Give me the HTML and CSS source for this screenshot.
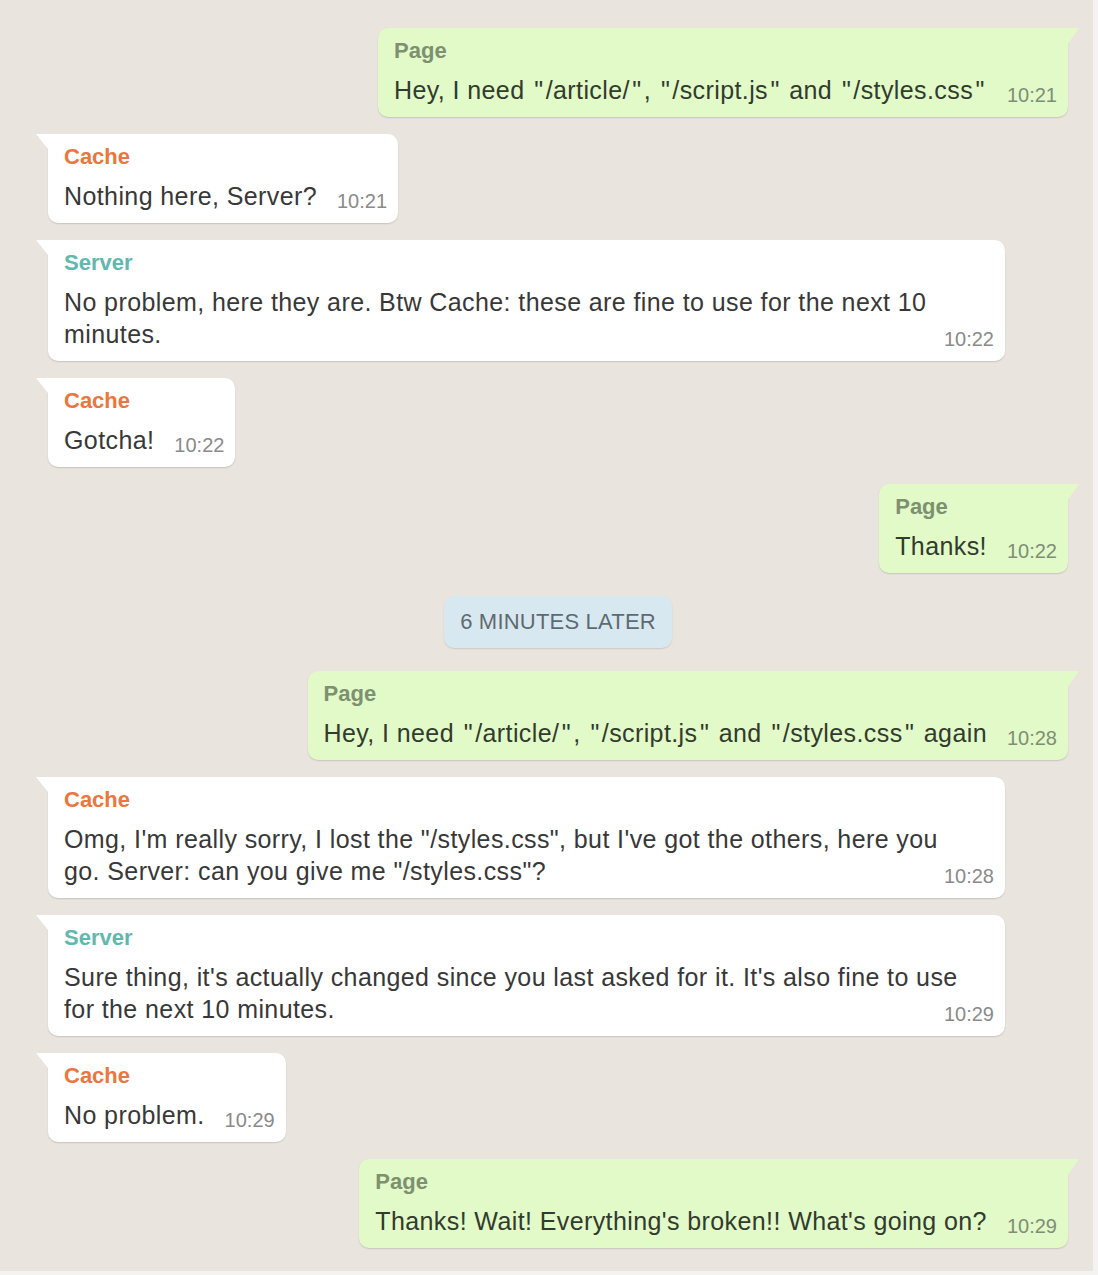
FILE: index.html
```html
<!DOCTYPE html>
<html lang="en">
<head>
<meta charset="utf-8">
<title>Cache chat</title>
<link rel="stylesheet" href="styles.css">
</head>
<body>
<div class="chat">
  <div class="row out">
    <div class="bubble page">
      <div class="name">Page</div>
      <div class="text">Hey, I need <span class="qt">"</span>/article/<span class="qt">"</span>, <span class="qt">"</span>/script.js<span class="qt">"</span> and <span class="qt">"</span>/styles.css<span class="qt">"</span><span class="time">10:21</span></div>
    </div>
  </div>
  <div class="row in">
    <div class="bubble">
      <div class="name cache">Cache</div>
      <div class="text">Nothing here, Server?<span class="time">10:21</span></div>
    </div>
  </div>
  <div class="row in">
    <div class="bubble">
      <div class="name server">Server</div>
      <div class="text">No problem, here they are. Btw Cache: these are fine to use for the next 10 minutes.<span class="time">10:22</span></div>
    </div>
  </div>
  <div class="row in">
    <div class="bubble">
      <div class="name cache">Cache</div>
      <div class="text">Gotcha!<span class="time">10:22</span></div>
    </div>
  </div>
  <div class="row out">
    <div class="bubble page">
      <div class="name">Page</div>
      <div class="text">Thanks!<span class="time">10:22</span></div>
    </div>
  </div>
  <div class="row center">
    <div class="divider">6 MINUTES LATER</div>
  </div>
  <div class="row out">
    <div class="bubble page">
      <div class="name">Page</div>
      <div class="text">Hey, I need <span class="qt">"</span>/article/<span class="qt">"</span>, <span class="qt">"</span>/script.js<span class="qt">"</span> and <span class="qt">"</span>/styles.css<span class="qt">"</span> again<span class="time">10:28</span></div>
    </div>
  </div>
  <div class="row in">
    <div class="bubble">
      <div class="name cache">Cache</div>
      <div class="text">Omg, I'm really sorry, I lost the "/styles.css", but I've got the others, here you go. Server: can you give me "/styles.css"?<span class="time">10:28</span></div>
    </div>
  </div>
  <div class="row in">
    <div class="bubble">
      <div class="name server">Server</div>
      <div class="text">Sure thing, it's actually changed since you last asked for it. It's also fine to use for the next 10 minutes.<span class="time">10:29</span></div>
    </div>
  </div>
  <div class="row in">
    <div class="bubble">
      <div class="name cache">Cache</div>
      <div class="text">No problem.<span class="time">10:29</span></div>
    </div>
  </div>
  <div class="row out">
    <div class="bubble page">
      <div class="name">Page</div>
      <div class="text">Thanks! Wait! Everything's broken!! What's going on?<span class="time">10:29</span></div>
    </div>
  </div>
</div>
</body>
</html>
```
FILE: styles.css
```css
html, body {
  margin: 0;
  padding: 0;
  background: #f4f3f1;
}

body {
  font-family: "Liberation Sans", Arial, sans-serif;
  color: #353535;
}

.chat {
  width: 1093px;
  height: 1271px;
  box-sizing: border-box;
  background: #e9e4dd;
  padding: 28px 25px 0 48px;
  display: flex;
  flex-direction: column;
  gap: 17px;
}

.row {
  display: flex;
}

.row.in {
  justify-content: flex-start;
}

.row.out {
  justify-content: flex-end;
}

.row.center {
  justify-content: center;
  padding: 6px 0;
}

.bubble {
  position: relative;
  display: flow-root;
  max-width: 957px;
  box-sizing: border-box;
  background: #ffffff;
  border-radius: 0 10px 10px 10px;
  padding: 10px 11px 11px 16px;
  box-shadow: 0 1px 1.5px rgba(0, 0, 0, 0.14);
}

.bubble::before {
  content: "";
  position: absolute;
  top: 0;
  left: -12px;
  width: 12px;
  height: 15px;
  background: inherit;
  clip-path: polygon(0 0, 100% 0, 100% 100%);
}

.bubble.page {
  background: #e2f9c8;
  border-radius: 10px 0 10px 10px;
}

.bubble.page::before {
  left: auto;
  right: -11px;
  width: 11px;
  height: 16px;
  clip-path: polygon(0 0, 100% 0, 0 100%);
}

.name {
  font-size: 22px;
  line-height: 26px;
  font-weight: 700;
  color: #7d9070;
  margin-bottom: 10px;
}

.name.cache {
  color: #ea7740;
}

.name.server {
  color: #60b8af;
}

.text {
  font-size: 25px;
  line-height: 32px;
  letter-spacing: 0.4px;
  color: #383838;
  padding-right: 14px;
}

.qt {
  letter-spacing: 0;
  padding: 0 2.5px;
}

.page .text {
  color: #313b2e;
}

.time {
  float: right;
  margin: 11px -14px 0 20px;
  font-size: 20px;
  line-height: 20px;
  letter-spacing: 0;
  color: #8a8a8a;
}

.page .time {
  color: #7e8e76;
}

.divider {
  background: #d8e8f1;
  color: #5e6a72;
  font-size: 22px;
  line-height: 26px;
  letter-spacing: 0.2px;
  padding: 13px 16px;
  border-radius: 10px;
  box-shadow: 0 1px 1.5px rgba(0, 0, 0, 0.12);
}
```
